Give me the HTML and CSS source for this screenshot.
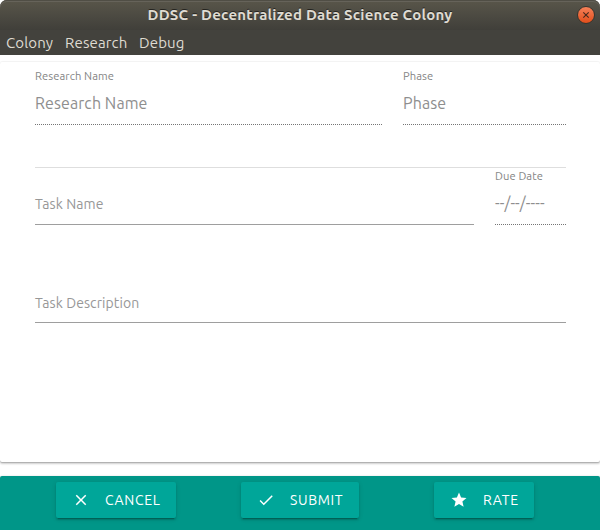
FILE: index.html
```html
<!DOCTYPE html>
<html lang="en">
<head>
<meta charset="utf-8">
<title>DDSC - Decentralized Data Science Colony</title>
<link rel="stylesheet" href="styles.css">
</head>
<body>
<div class="window">
  <header class="titlebar">
    <h1 class="title">DDSC - Decentralized Data Science Colony</h1>
    <button class="close" aria-label="Close"><svg viewBox="0 0 16 16"><path d="M5.3 5.3l5.4 5.4M10.7 5.3l-5.4 5.4"/></svg></button>
  </header>
  <nav class="menu"><span class="colony">Colony</span><span class="research">Research</span><span class="debug">Debug</span></nav>
  <main class="card">
    <section class="row research-row">
      <div class="field disabled"><label class="small">Research Name</label><div class="value">Research Name</div></div>
      <div class="field disabled"><label class="small">Phase</label><div class="value">Phase</div></div>
    </section>
    <hr>
    <section class="row task-row">
      <div class="field"><label class="placeholder">Task Name</label></div>
      <div class="field disabled"><label class="small">Due Date</label><div class="value">--/--/----</div></div>
    </section>
    <section class="description">
      <div class="field"><label class="placeholder">Task Description</label></div>
    </section>
  </main>
  <footer class="actions">
    <div class="cell"><button class="btn cancel"><svg viewBox="0 0 24 24"><path d="M19 6.41L17.59 5 12 10.59 6.41 5 5 6.41 10.59 12 5 17.59 6.41 19 12 13.41 17.59 19 19 17.59 13.41 12z"/></svg><span>CANCEL</span></button></div>
    <div class="cell"><button class="btn submit"><svg viewBox="0 0 24 24"><path d="M9 16.17L4.83 12l-1.42 1.41L9 19 21 7l-1.41-1.41z"/></svg><span>SUBMIT</span></button></div>
    <div class="cell"><button class="btn rate"><svg viewBox="0 0 24 24"><path d="M12 17.27L18.18 21l-1.64-7.03L22 9.24l-7.19-.61L12 2 9.19 8.63 2 9.24l5.46 4.73L5.82 21z"/></svg><span>RATE</span></button></div>
  </footer>
</div>
</body>
</html>
```
FILE: styles.css
```css
* { box-sizing: border-box; }
body { margin: 0; background: #fff; font-family: Ubuntu, "Noto Sans", sans-serif; }
button { border: 0; padding: 0; font-family: inherit; }
.window { width: 600px; height: 530px; display: flex; flex-direction: column; overflow: hidden; }
.titlebar {
  height: 30px; flex: none; display: grid; grid-template-columns: 30px 1fr 30px; align-items: center;
  border-radius: 7px 7px 0 0; background: linear-gradient(#59564a, #403f3a);
  box-shadow: inset 0 1px #504e45, inset 0 2px #66635a;
}
.title {
  grid-column: 2; margin: 0; text-align: center; white-space: nowrap; color: #dfdbd2;
  font-size: 15px; line-height: 30px; font-weight: 700; letter-spacing: .22px; text-shadow: 0 -1px #25241f;
}
.close {
  width: 18px; height: 18px; margin-left: 7px; border-radius: 50%;
  border: 1px solid #37352e; background: linear-gradient(#f58159, #e24e1b);
}
.close svg { display: block; width: 16px; height: 16px; fill: none; stroke: #45291d; stroke-width: 1.1; }
.menu {
  height: 25px; flex: none; display: flex; padding-left: 6px; background: #43423d; color: #dfdbd2;
  font-size: 15px; line-height: 26px; letter-spacing: .14px; white-space: nowrap;
}
.colony { width: 59px; }
.research { width: 74px; }
.card {
  height: 400px; flex: none; margin-top: 7px; padding: 0 34px 0 35px; border-radius: 2px; background: #fff;
  box-shadow: 0 2px 2px rgba(0,0,0,.14), 0 1px 3px rgba(0,0,0,.12), 0 1px rgba(0,0,0,.12), 0 -1px rgba(0,0,0,.03);
}
.row { display: grid; column-gap: 21px; }
.research-row { grid-template-columns: 347px 163px; padding-top: 6px; height: 105px; }
.task-row { grid-template-columns: 439px 71px; height: 99px; }
.field { height: 57px; border-bottom: 1px solid #9e9e9e; color: #858585; white-space: nowrap; }
.disabled { border-bottom: 1px dotted #757575; }
.small { display: block; height: 16px; font-size: 11.2px; line-height: 16px; letter-spacing: .09px; }
.value { height: 40px; font-size: 16px; line-height: 38px; letter-spacing: .09px; color: #8e8e8e; }
.placeholder { display: block; padding-top: 25px; font-size: 14px; line-height: 22px; letter-spacing: .08px; color: #979797; }
hr { height: 1px; width: 100%; margin: 0; border: 0; background: #dedede; }
.description .field { height: 56px; }
.actions {
  flex: 1; margin-top: 14px; padding: 6px 24px; display: grid; grid-template-columns: repeat(3, 1fr);
  border-radius: 2px 2px 0 0; background: #009688; box-shadow: 0 0 2px rgba(0,0,0,.15);
}
.cell { display: flex; justify-content: center; align-items: flex-start; }
.btn {
  height: 36px; padding-left: 16px; display: flex; align-items: center; gap: 15px; border-radius: 2px;
  background: #00a699; color: #fff; font-size: 14px; line-height: 36px; letter-spacing: .65px; white-space: nowrap;
  box-shadow: 0 2px 2px rgba(0,0,0,.14), 0 1px 5px rgba(0,0,0,.12), 0 3px 1px -2px rgba(0,0,0,.2);
}
.btn svg { width: 18px; height: 18px; fill: currentColor; }
.cancel { width: 120px; }
.submit { width: 118px; }
.rate { width: 100px; }
```
